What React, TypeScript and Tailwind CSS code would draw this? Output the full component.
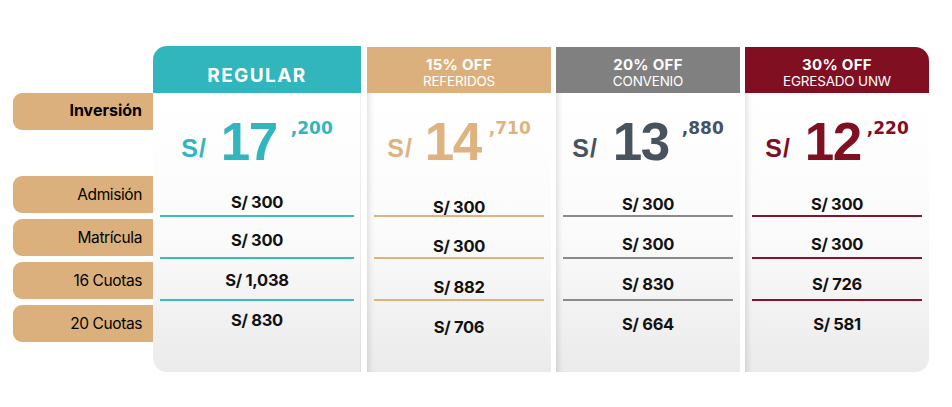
import React from "react";

type Col = {
  w: string;
  headBg: string;
  title: string;
  sub?: string;
  numColor: string;
  line: string;
  big: string;
  sup: string;
  gap1: string;
  gap2: string;
  rows: { v: string; pt: string }[];
  round: string;
  bodyRound: string;
  shadow: boolean;
  headTop: string;
};

const cols: Col[] = [
  {
    w: "w-[208px]",
    headBg: "bg-[#31b6bd]",
    title: "REGULAR",
    numColor: "text-[#31b6bd]",
    line: "border-[#3bbcc4]",
    big: "17",
    sup: ",200",
    gap1: "mr-[14px]",
    gap2: "mr-[14px]",
    rows: [
      { v: "S/ 300", pt: "pt-[18px]" },
      { v: "S/ 300", pt: "pt-[14px]" },
      { v: "S/ 1,038", pt: "pt-[12px]" },
      { v: "S/ 830", pt: "pt-[10px]" },
    ],
    round: "rounded-tl-[14px]",
    bodyRound: "rounded-bl-[14px]",
    shadow: false,
    headTop: "h-[47px]",
  },
  {
    w: "w-[184px]",
    headBg: "bg-[#dcb07c]",
    title: "15% OFF",
    sub: "REFERIDOS",
    numColor: "text-[#dfb37f]",
    line: "border-[#e0b37e]",
    big: "14",
    sup: ",710",
    gap1: "mr-[12px]",
    gap2: "mr-[8px]",
    rows: [
      { v: "S/ 300", pt: "pt-[23px]" },
      { v: "S/ 300", pt: "pt-[20px]" },
      { v: "S/ 882", pt: "pt-[19px]" },
      { v: "S/ 706", pt: "pt-[17px]" },
    ],
    round: "",
    bodyRound: "",
    shadow: true,
    headTop: "h-[46px]",
  },
  {
    w: "w-[184px]",
    headBg: "bg-[#808080]",
    title: "20% OFF",
    sub: "CONVENIO",
    numColor: "text-[#48535d]",
    line: "border-[#8a8a8a]",
    big: "13",
    sup: ",880",
    gap1: "mr-[15px]",
    gap2: "mr-[13px]",
    rows: [
      { v: "S/ 300", pt: "pt-[20px]" },
      { v: "S/ 300", pt: "pt-[18px]" },
      { v: "S/ 830", pt: "pt-[16px]" },
      { v: "S/ 664", pt: "pt-[14px]" },
    ],
    round: "",
    bodyRound: "",
    shadow: true,
    headTop: "h-[46px]",
  },
  {
    w: "w-[184px]",
    headBg: "bg-[#800f21]",
    title: "30% OFF",
    sub: "EGRESADO UNW",
    numColor: "text-[#800f21]",
    line: "border-[#85152a]",
    big: "12",
    sup: ",220",
    gap1: "mr-[14px]",
    gap2: "mr-[6px]",
    rows: [
      { v: "S/ 300", pt: "pt-[20px]" },
      { v: "S/ 300", pt: "pt-[18px]" },
      { v: "S/ 726", pt: "pt-[16px]" },
      { v: "S/ 581", pt: "pt-[14px]" },
    ],
    round: "rounded-tr-[14px]",
    bodyRound: "rounded-br-[14px]",
    shadow: true,
    headTop: "h-[46px]",
  },
];

const labels = ["Admisión", "Matrícula", "16 Cuotas", "20 Cuotas"];

const inter = "font-['Inter','Liberation_Sans',sans-serif]";

function Column({ c }: { c: Col }) {
  return (
    <div className={`${c.w} flex flex-col ${c.headTop === "h-[46px]" ? "mt-px" : ""}`}>
      <div
        className={`${c.headTop} ${c.headBg} ${c.round} flex flex-col items-center text-white ${inter} ${
          c.sub ? "pt-[10px]" : "pt-[20px]"
        }`}
      >
        {c.sub ? (
          <>
            <div className="h-[15px] text-[15px] leading-[15px] font-bold tracking-[0.3px]">{c.title}</div>
            <div className="h-[14px] text-[13.5px] leading-[14px] font-normal mt-[2px] tracking-[-0.2px]">
              {c.sub}
            </div>
          </>
        ) : (
          <div className="text-[19px] leading-none font-bold tracking-[1.4px]">{c.title}</div>
        )}
      </div>
      <div
        className={`h-[279px] bg-linear-to-b from-white via-[#fbfbfb] to-[#ebebeb] ${c.bodyRound} ${
          c.shadow ? "shadow-[inset_7px_0_6px_-5px_rgba(0,0,0,0.13)]" : "shadow-[inset_-1px_0_0_0_rgba(0,0,0,0.05)]"
        }`}
      >
        <div className="h-[82px] flex justify-center items-start pt-[22px]">
          <span
            className={`${c.numColor} ${c.gap1} mt-[21px] text-[25px] leading-none font-bold tracking-[1px] font-['Liberation_Sans',sans-serif]`}
          >
            S/
          </span>
          <span
            className={`${c.numColor} ${c.gap2} text-[53px] leading-none font-bold tracking-[-1.5px] font-['Liberation_Sans',sans-serif]`}
          >
            {c.big}
          </span>
          <span
            className={`${c.numColor} mt-[5px] text-[17px] leading-none font-bold font-['DejaVu_Sans',sans-serif]`}
          >
            {c.sup}
          </span>
        </div>
        {c.rows.map((r, i) => (
          <div
            key={i}
            className={`h-[42px] mx-[7px] ${r.pt} ${i < 3 ? `border-b-2 ${c.line}` : ""} text-center ${inter} text-[16.5px] leading-[18px] font-bold text-[#111] tracking-[-0.3px]`}
          >
            {r.v}
          </div>
        ))}
      </div>
    </div>
  );
}

export default function App() {
  return (
    <div className="w-[952px] h-[407px] bg-white flex pl-[13px] pt-[46px]">
      <div className={`w-[140px] flex flex-col mt-[47px] ${inter}`}>
        <div className="h-[37px] bg-[#dcb07c] rounded-l-[9px] flex items-center justify-end pr-[11px] pb-[4px]">
          <span className="text-[16px] leading-none font-bold text-black">Inversión</span>
        </div>
        <div className="h-[46px]" />
        {labels.map((l, i) => (
          <div
            key={l}
            className={`h-[37px] bg-[#dcb07c] rounded-l-[9px] flex items-center justify-end pr-[11px] ${
              i > 0 ? "mt-[6px]" : ""
            }`}
          >
            <span className="text-[15.5px] leading-none font-normal text-black tracking-[-0.4px]">{l}</span>
          </div>
        ))}
      </div>
      <div className="flex gap-[5px]">
        <div className="mr-px">
          <Column c={cols[0]} />
        </div>
        <Column c={cols[1]} />
        <Column c={cols[2]} />
        <Column c={cols[3]} />
      </div>
    </div>
  );
}
